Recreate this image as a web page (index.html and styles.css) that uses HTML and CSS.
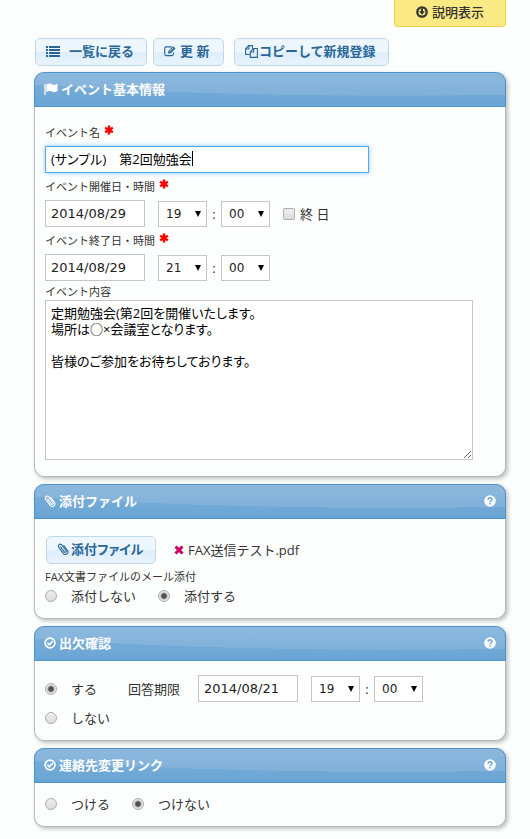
FILE: index.html
```html
<!DOCTYPE html>
<html lang="ja">
<head>
<meta charset="utf-8">
<meta name="viewport" content="width=device-width, initial-scale=1">
<title>イベント基本情報</title>
<link rel="stylesheet" href="styles.css">
</head>
<body>
<svg class="sprite" aria-hidden="true">
  <symbol id="clip" viewBox="0 0 12 12"><path d="M3.600 3.800 7.300 8.900a1 1 0 0 0 1.700-1.200L4.900 2A1.900 1.900 0 0 0 1.700 4.200L6.200 10.300a2.500 2.500 0 0 0 4.200-2.900L6.800 2.500" fill="none" stroke="currentColor" stroke-width="1.100" stroke-linecap="round"/></symbol>
  <symbol id="check" viewBox="0 0 12 12"><circle cx="6" cy="6" r="4.900" fill="none" stroke="currentColor" stroke-width="1.700"/><path d="M3.400 5.800 5.400 7.800 8.800 4.200" fill="none" stroke="currentColor" stroke-width="1.700"/></symbol>
  <symbol id="help" viewBox="0 0 12 12"><circle cx="6" cy="6" r="5.800" fill="currentColor"/><path d="M4.100 4.700C4.100 2.300 8 2.300 8 4.500 8 5.900 6.100 5.700 6.100 7.200M6.100 8.100V9.600" fill="none" stroke="#77acd6" stroke-width="1.600"/></symbol>
  <symbol id="star" viewBox="0 0 10 10"><path d="M5 .5V9.500M1.100 2.750 8.900 7.250M8.900 2.750 1.100 7.250" stroke="currentColor" stroke-width="2.500"/></symbol>
</svg>

<div class="page">
  <div class="topbar">
    <button type="button" class="guide"><svg class="icon" viewBox="0 0 12 12" aria-hidden="true"><circle cx="6" cy="6" r="4.700" fill="none" stroke="currentColor" stroke-width="2.300"/><path d="M5 2.500H7V5.300H9L6 8.800 3 5.300H5Z" fill="currentColor"/></svg>説明表示</button>
  </div>

  <div class="toolbar">
    <button type="button" class="btn btn-list"><svg class="icon icon-list" viewBox="0 0 14 12" aria-hidden="true"><path d="M0 2H2M3 2H14M0 5H2M3 5H14M0 8H2M3 8H14M0 11H2M3 11H14" stroke="currentColor" stroke-width="1.800"/></svg>一覧に戻る</button>
    <button type="button" class="btn btn-update"><svg class="icon" viewBox="0 0 13 12" aria-hidden="true"><path d="M8.500 1.500H2.500Q.8 1.500 .8 3.200V9.300Q.8 11 2.500 11H8.500Q10.200 11 10.200 9.300V7.500" fill="none" stroke="currentColor" stroke-width="1.200"/><path d="M4.500 8.700V6.300L10 .8 12.500 3.200 7 8.700Z" fill="currentColor"/><path d="M6 6.700 10 2.700" stroke="#eef6fd" stroke-width=".8"/></svg>更 新</button>
    <button type="button" class="btn btn-copy"><svg class="icon icon-copy" viewBox="0 0 13 13" aria-hidden="true"><path d="M5 9.500H.6V3.800L3.600.6H7.500V3.500M.6 4H4V.6M5.300 12.400V6.600L8.300 3.500H12.400V12.400ZM5.300 7H8.700V3.500" fill="none" stroke="currentColor" stroke-width="1.100"/></svg>コピーして新規登録</button>
  </div>

  <main class="panels">
    <section class="panel">
      <h2 class="panel-head"><svg class="icon icon-flag" viewBox="0 0 14 12" aria-hidden="true"><path d="M1 1V12" stroke="currentColor" stroke-width="1.300"/><path d="M2.300 1.800C5-.2 7 .5 8.500 1.500 10 2.300 11.500 1.800 13.500.8V8C11.500 9.200 10 9.500 8.500 8.700 7 7.700 5 7.500 2.300 9Z" fill="currentColor"/></svg>イベント基本情報</h2>
      <div class="panel-body basic">
        <label class="caption" for="name">イベント名<svg class="required" aria-hidden="true"><use href="#star"/></svg></label>
        <div class="name-field"><input class="field name" id="name" type="text" value="(サンプル)　第2回勉強会"><span class="caret"></span></div>

        <label class="caption" for="start">イベント開催日・時間<svg class="required" aria-hidden="true"><use href="#star"/></svg></label>
        <div class="when">
          <input class="field date" id="start" type="text" value="2014/08/29">
          <div class="time">
            <span class="pick"><select aria-label="開始 時"><option>19</option></select></span>
            <span class="colon">:</span>
            <span class="pick"><select aria-label="開始 分"><option>00</option></select></span>
          </div>
          <label class="allday"><input type="checkbox">終 日</label>
        </div>

        <label class="caption" for="end">イベント終了日・時間<svg class="required" aria-hidden="true"><use href="#star"/></svg></label>
        <div class="when">
          <input class="field date" id="end" type="text" value="2014/08/29">
          <div class="time">
            <span class="pick"><select aria-label="終了 時"><option>21</option></select></span>
            <span class="colon">:</span>
            <span class="pick"><select aria-label="終了 分"><option>00</option></select></span>
          </div>
        </div>

        <label class="caption tight" for="content">イベント内容</label>
        <textarea class="field content" id="content">定期勉強会(第2回を開催いたします。
場所は○×会議室となります。

皆様のご参加をお待ちしております。</textarea>
      </div>
    </section>

    <section class="panel">
      <h2 class="panel-head"><svg class="icon" aria-hidden="true"><use href="#clip"/></svg>添付ファイル<button type="button" class="help" aria-label="ヘルプ"><svg class="icon" aria-hidden="true"><use href="#help"/></svg></button></h2>
      <div class="panel-body attach">
        <div class="file-row">
          <button type="button" class="btn btn-file"><svg class="icon" aria-hidden="true"><use href="#clip"/></svg>添付ファイル</button>
          <button type="button" class="remove" aria-label="削除"><svg viewBox="0 0 10 10" aria-hidden="true"><path d="M1.500 1.500 8.500 8.500M8.500 1.500 1.500 8.500" stroke="currentColor" stroke-width="3"/></svg></button>
          <span>FAX送信テスト.pdf</span>
        </div>
        <div class="caption" id="mail-attach">FAX文書ファイルのメール添付</div>
        <div class="choices" role="radiogroup" aria-labelledby="mail-attach">
          <label class="choice"><input type="radio" name="attach">添付しない</label>
          <label class="choice"><input type="radio" name="attach" checked>添付する</label>
        </div>
      </div>
    </section>

    <section class="panel">
      <h2 class="panel-head"><svg class="icon" aria-hidden="true"><use href="#check"/></svg>出欠確認<button type="button" class="help" aria-label="ヘルプ"><svg class="icon" aria-hidden="true"><use href="#help"/></svg></button></h2>
      <div class="panel-body attendance">
        <div class="choices">
          <label class="choice"><input type="radio" name="attendance" checked>する</label>
          <div class="deadline">
            <label for="deadline">回答期限</label>
            <div class="when">
              <input class="field date" id="deadline" type="text" value="2014/08/21">
              <div class="time">
                <span class="pick"><select aria-label="期限 時"><option>19</option></select></span>
                <span class="colon">:</span>
                <span class="pick"><select aria-label="期限 分"><option>00</option></select></span>
              </div>
            </div>
          </div>
        </div>
        <div class="choices">
          <label class="choice"><input type="radio" name="attendance">しない</label>
        </div>
      </div>
    </section>

    <section class="panel">
      <h2 class="panel-head"><svg class="icon" aria-hidden="true"><use href="#check"/></svg>連絡先変更リンク<button type="button" class="help" aria-label="ヘルプ"><svg class="icon" aria-hidden="true"><use href="#help"/></svg></button></h2>
      <div class="panel-body link">
        <div class="choices">
          <label class="choice"><input type="radio" name="link">つける</label>
          <label class="choice"><input type="radio" name="link" checked>つけない</label>
        </div>
      </div>
    </section>
  </main>
</div>
</body>
</html>
```
FILE: styles.css
```css
* {
  box-sizing: border-box;
}

body {
  margin: 0;
  background: #fdfffe;
  color: #333;
  font: 13px/20px "Open Sans", "Noto Sans CJK JP", sans-serif;
}

button,
input,
select,
textarea {
  margin: 0;
  font: inherit;
  color: inherit;
}

button {
  cursor: pointer;
}

.sprite {
  display: none;
}

.page {
  padding: 0 24px 10px 34px;
}

.icon {
  width: 12px;
  height: 12px;
  flex: none;
}

/* Top buttons */

.topbar {
  display: flex;
  justify-content: flex-end;
}

.guide {
  display: flex;
  align-items: center;
  justify-content: center;
  gap: 4px;
  width: 112px;
  height: 27px;
  padding: 0 0 2px;
  border: 1px solid #edd64f;
  border-top: 0;
  border-radius: 0 0 4px 4px;
  background: #fbe983;
  color: #333;
  font-weight: 500;
}

.toolbar {
  display: flex;
  padding: 11px 0 6px 1px;
}

.btn {
  display: flex;
  align-items: center;
  height: 28px;
  padding: 0 10px 2px;
  border: 1px solid #bfd8ec;
  border-radius: 5px;
  background: linear-gradient(#eff7fe 50%, #dfeefc 52%, #e8f4fe);
  color: #286799;
  font-weight: 700;
  white-space: nowrap;
}

.btn-list {
  gap: 9px;
  width: 112px;
  margin-right: 6px;
}

.btn-update {
  gap: 4px;
  width: 71px;
  margin-right: 10px;
}

.btn-copy {
  gap: 1px;
  width: 155px;
}

.btn-file {
  gap: 2px;
  width: 110px;
  margin-left: 1px;
  font-feature-settings: "palt";
}

.icon-list,
.icon-flag {
  width: 14px;
}

.icon-copy {
  width: 13px;
  height: 13px;
}

/* Panels */

.panels {
  display: flex;
  flex-direction: column;
  gap: 7px;
}

.panel {
  border: 1px solid #b7b9ba;
  border-top: 0;
  border-radius: 10px;
  background: #fdfffe;
  box-shadow: 2px 2px 4px rgba(0, 0, 0, .25);
}

.panel-head {
  display: flex;
  align-items: center;
  gap: 3px;
  height: 35px;
  margin: 0 -1px;
  padding: 0 9px 2px;
  border: 1px solid #4a94cf;
  border-radius: 10px 10px 0 0;
  background:
    radial-gradient(ellipse 620px 60px at 76% -37px, rgba(255, 255, 255, .11) 99%, transparent 100%),
    linear-gradient(#7fafd9, #69a5d4);
  color: #fff;
  font-size: 13px;
  font-weight: 700;
}

.help {
  display: flex;
  margin-left: auto;
  padding: 0;
  border: 0;
  background: none;
  color: #fff;
}

.panel-body {
  padding: 0 10px;
}

.basic {
  padding-top: 18px;
  padding-bottom: 16px;
}

.caption {
  display: flex;
  gap: 4px;
  margin: 6px 0 5px;
  font-size: 11px;
  line-height: 16px;
}

.basic .caption:first-child {
  margin-top: 0;
}

.basic .tight {
  margin: 3px 0 0;
}

.required {
  width: 10px;
  height: 10px;
  color: #f00;
}

/* Fields */

.field {
  display: block;
  border: 1px solid #c4c6c7;
  border-radius: 0;
  background: #fff;
  color: #000;
  outline: 0;
}

.name-field {
  position: relative;
  width: 72%;
}

.name {
  width: 100%;
  height: 27px;
  padding: 0 5px 2px;
  border-color: #57a8ea;
  box-shadow: 0 0 5px #8cc6f7;
  font-feature-settings: "palt";
}

.caret {
  position: absolute;
  top: 5px;
  left: 147px;
  width: 1px;
  height: 15px;
  background: #000;
}

.content {
  width: 95%;
  min-width: 95%;
  height: 160px;
  padding: 4px 5px;
  line-height: 16px;
  font-feature-settings: "palt";
}

.when,
.time {
  display: flex;
  align-items: center;
}

.when {
  gap: 13px;
}

.date {
  width: 100px;
  height: 27px;
  padding: 0 5px;
  color: #222;
  font-family: "DejaVu Sans", sans-serif;
}

.pick {
  position: relative;
}

.pick select {
  display: block;
  width: 49px;
  height: 26px;
  padding: 0 0 0 7px;
  border: 1px solid #c4c6c7;
  border-radius: 0;
  background: #fff;
  color: #222;
  font-family: "DejaVu Sans", sans-serif;
  font-size: 12px;
  appearance: none;
}

.pick::after {
  content: "";
  position: absolute;
  top: 10px;
  right: 6px;
  border: solid transparent;
  border-width: 6px 3px 0;
  border-top-color: #000;
  pointer-events: none;
}

.colon {
  width: 14px;
  text-align: center;
}

/* Check boxes and radio buttons */

.allday {
  display: flex;
  align-items: center;
  gap: 5px;
}

input[type="checkbox"],
input[type="radio"] {
  flex: none;
  width: 12px;
  height: 12px;
  border: 1px solid #adadad;
  background: linear-gradient(#eee, #dcdcdc);
  appearance: none;
}

input[type="checkbox"] {
  border-radius: 2px;
}

input[type="radio"] {
  border-radius: 50%;
}

input[type="checkbox"]:checked {
  background: #555;
}

input[type="radio"]:checked {
  background: radial-gradient(circle, #505050 2px, #e6e6e6 4px);
}

.choices {
  display: flex;
  align-items: center;
  gap: 22px;
}

.choice {
  display: flex;
  align-items: center;
  gap: 14px;
}

.attach {
  padding-top: 17px;
  padding-bottom: 12px;
}

.file-row {
  display: flex;
  align-items: center;
  gap: 4px;
}

.attach .caption {
  margin: 5px 0 1px;
}

.remove {
  width: 10px;
  height: 10px;
  margin-left: 14px;
  padding: 0;
  border: 0;
  background: none;
  color: #c9005f;
}

.remove svg {
  display: block;
}

.attendance {
  padding-top: 14px;
  padding-bottom: 12px;
}

.attendance .choices {
  gap: 31px;
}

.attendance .choices + .choices {
  margin-top: 6px;
}

.deadline {
  display: flex;
  align-items: center;
  gap: 18px;
}

.link {
  padding-top: 11px;
  padding-bottom: 12px;
}
```
